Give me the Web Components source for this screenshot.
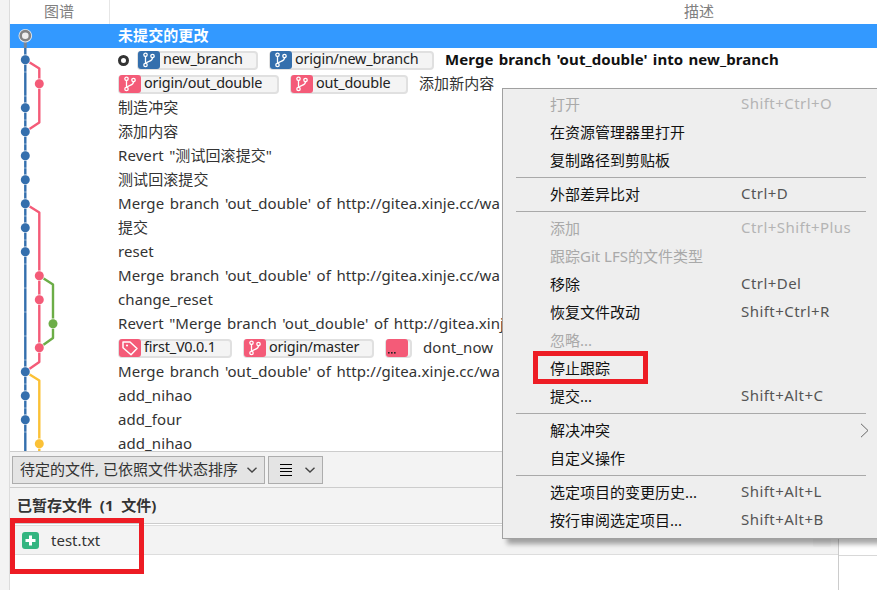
<!DOCTYPE html>
<html lang="zh-CN">
<head>
<meta charset="utf-8">
<title>Sourcetree</title>
<style>
    html, body { margin: 0; height: 100%; overflow: hidden; background: #fff; }
    body { font: 15px "Noto Sans", "Noto Sans CJK SC", sans-serif; color: #333; }
</style>
</head>
<body>
<repo-window>
    <column-header></column-header>
    <commit-list>
        <commit-row selected>未提交的更改</commit-row>
        <commit-row>
            <head-dot></head-dot>
            <ref-tag color="#346fad" width="121">new_branch</ref-tag>
            <ref-tag color="#346fad" width="165">origin/new_branch</ref-tag>
            <b>Merge branch 'out_double' into new_branch</b>
        </commit-row>
        <commit-row>
            <ref-tag color="#f45b78" width="161">origin/out_double</ref-tag>
            <ref-tag color="#f45b78" width="118">out_double</ref-tag>
            <span>添加新内容</span>
        </commit-row>
        <commit-row>制造冲突</commit-row>
        <commit-row>添加内容</commit-row>
        <commit-row>Revert "测试回滚提交"</commit-row>
        <commit-row>测试回滚提交</commit-row>
        <commit-row>Merge branch 'out_double' of http://gitea.xinje.cc/wa</commit-row>
        <commit-row>提交</commit-row>
        <commit-row>reset</commit-row>
        <commit-row>Merge branch 'out_double' of http://gitea.xinje.cc/wa</commit-row>
        <commit-row>change_reset</commit-row>
        <commit-row>Revert "Merge branch 'out_double' of http://gitea.xinj</commit-row>
        <commit-row>
            <ref-tag color="#f45b78" width="114" kind="tag">first_V0.0.1</ref-tag>
            <ref-tag color="#f45b78" width="131">origin/master</ref-tag>
            <ref-tag color="#f45b78" width="27" kind="more"></ref-tag>
            <span>dont_now</span>
        </commit-row>
        <commit-row>Merge branch 'out_double' of http://gitea.xinje.cc/wa</commit-row>
        <commit-row>add_nihao</commit-row>
        <commit-row>add_four</commit-row>
        <commit-row>add_nihao</commit-row>
    </commit-list>
    <status-toolbar></status-toolbar>
    <staged-panel>
        <span slot="title">已暂存文件  (1  文件)</span>
        test.txt
    </staged-panel>
</repo-window>

<context-menu>
    <menu-item disabled>打开<span slot="keys">Shift+Ctrl+O</span></menu-item>
    <menu-item>在资源管理器里打开</menu-item>
    <menu-item>复制路径到剪贴板</menu-item>
    <menu-sep></menu-sep>
    <menu-item>外部差异比对<span slot="keys">Ctrl+D</span></menu-item>
    <menu-sep></menu-sep>
    <menu-item disabled>添加<span slot="keys">Ctrl+Shift+Plus</span></menu-item>
    <menu-item disabled>跟踪Git LFS的文件类型</menu-item>
    <menu-item>移除<span slot="keys">Ctrl+Del</span></menu-item>
    <menu-item>恢复文件改动<span slot="keys">Shift+Ctrl+R</span></menu-item>
    <menu-item disabled>忽略...</menu-item>
    <menu-item>停止跟踪</menu-item>
    <menu-item>提交...<span slot="keys">Shift+Alt+C</span></menu-item>
    <menu-sep></menu-sep>
    <menu-item submenu>解决冲突</menu-item>
    <menu-item>自定义操作</menu-item>
    <menu-sep></menu-sep>
    <menu-item>选定项目的变更历史...<span slot="keys">Shift+Alt+L</span></menu-item>
    <menu-item>按行审阅选定项目...<span slot="keys">Shift+Alt+B</span></menu-item>
</context-menu>

<red-mark style="left:10px;top:518px;width:134px;height:56px"></red-mark>
<red-mark style="left:533px;top:351px;width:115px;height:33px"></red-mark>

<script>
    const BLUE = '#346fad', PINK = '#f45b78', GREEN = '#6cad47', YELLOW = '#fbc136';
    const LANE = [25.3, 39.3, 53];
    const rowY = (i) => 11.7 + 24 * i;  // centre of row i, inside the list's own box

    class RepoWindow extends HTMLElement {
        constructor () {
            super();
            this.attachShadow({mode: 'open'}).innerHTML = `
                <style>
                    :host { display: flex; height: 590px; }
                    .gutter { width: 9px; background: #f3f3f3; border-right: 1px solid #dcdcdc; flex: none; }
                    .main { flex: 1; min-width: 0; display: flex; flex-direction: column; }
                </style>
                <div class="gutter"></div>
                <div class="main"><slot></slot></div>
            `;
        }
    }

    class ColumnHeader extends HTMLElement {
        constructor () {
            super();
            this.attachShadow({mode: 'open'}).innerHTML = `
                <style>
                    :host { display: flex; height: 24px; color: #808080; background: #fff; line-height: 22px; flex: none; }
                    .graph { width: 100px; box-sizing: border-box; padding-left: 34px; border-right: 1px solid #e6e6e6; }
                    .desc { flex: 1; padding-left: 574px; }
                </style>
                <div class="graph">图谱</div>
                <div class="desc">描述</div>
            `;
        }
    }

    class CommitGraph extends HTMLElement {
        constructor () {
            super();
            this.root = this.attachShadow({mode: 'open'});
        }

        connectedCallback () {
            const nodes = [
                [1, 0, BLUE], [2, 1, PINK], [3, 0, BLUE], [4, 0, BLUE], [5, 0, BLUE], [6, 0, BLUE],
                [7, 0, BLUE], [8, 0, BLUE], [9, 0, BLUE], [10, 1, PINK], [11, 1, PINK], [12, 2, GREEN],
                [13, 1, PINK], [14, 0, BLUE], [15, 0, BLUE], [16, 0, BLUE], [17, 1, YELLOW],
            ];
            // y positions here are list-relative: page y minus 24
            const lines = [
                [`M${LANE[0]} 35.7L${LANE[1]} 44.5V98.5L${LANE[0]} 107.7`, PINK],
                [`M${LANE[0]} 179.7L${LANE[1]} 188.5V323.7V338L${LANE[0]} 347.7`, PINK],
                [`M${LANE[1]} 251.7L${LANE[2]} 260.5V314L${LANE[1]} 323.7`, GREEN],
                [`M${LANE[0]} 347.7L${LANE[1]} 356.5V427`, YELLOW],
                [`M${LANE[0]} 24V427`, BLUE],
            ];
            const seams = [];
            for (let i = 2; i < 18; i++) {
                seams.push(`<rect x="${LANE[0] - 2}" y="${24 * i - 0.5}" width="4" height="1" fill="#fff" opacity=".45"/>`);
            }
            this.root.innerHTML = `
                <style>
                    :host { position: absolute; left: 0; top: 0; width: 70px; height: 427px; pointer-events: none; }
                    svg { display: block; }
                </style>
                <svg width="70" height="427" viewBox="10 0 70 427" fill="none">
                    ${lines.map(([d, c]) => `<path d="${d}" stroke="${c}" stroke-width="2.4" stroke-linejoin="round"/>`).join('')}
                    <path d="M${LANE[0]} 12V24" stroke="#77879a" stroke-width="3"/>
                    ${seams.join('')}
                    ${nodes.map(([i, l, c]) => `<circle cx="${LANE[l]}" cy="${rowY(i)}" r="5.4" fill="#fff" opacity=".75"/><circle cx="${LANE[l]}" cy="${rowY(i)}" r="4.5" fill="${c}"/>`).join('')}
                    <circle cx="${LANE[0]}" cy="11.7" r="6.8" fill="#e4e9ef"/>
                    <circle cx="${LANE[0]}" cy="11.7" r="4.6" fill="#eeeeee" stroke="#838383" stroke-width="2.6"/>
                </svg>
            `;
        }
    }

    class CommitList extends HTMLElement {
        constructor () {
            super();
            this.attachShadow({mode: 'open'}).innerHTML = `
                <style>
                    :host { display: block; position: relative; height: 427px; flex: none; background: #fff; }
                </style>
                <slot></slot>
                <commit-graph></commit-graph>
            `;
        }
    }

    class CommitRow extends HTMLElement {
        constructor () {
            super();
            this.attachShadow({mode: 'open'}).innerHTML = `
                <style>
                    :host { display: flex; align-items: center; gap: 11px; box-sizing: border-box; height: 24px; padding: 0 0 2px 108px;
                            line-height: 16px; white-space: nowrap; word-spacing: 1.5px; letter-spacing: .08px; }
                    :host([selected]) { background: #3399ff; color: #fff; font-weight: 700; }
                    ::slotted(b) { color: #111; word-spacing: 1.2px; }
                </style>
                <slot></slot>
            `;
        }
    }

    class HeadDot extends HTMLElement {
        constructor () {
            super();
            this.attachShadow({mode: 'open'}).innerHTML = `
                <style>
                    :host { display: block; box-sizing: border-box; width: 11px; height: 11px; margin: 2px -3px 0 0; border: 3px solid #333; border-radius: 50%; flex: none; }
                </style>
            `;
        }
    }

    const TAG_ICONS = {
        branch: `<svg width="22" height="18" viewBox="0 0 22 18" fill="none" stroke="#fff" stroke-width="1.3">
                    <circle cx="7.5" cy="3.8" r="1.7"/><circle cx="7.5" cy="14" r="1.7"/><circle cx="14.5" cy="5" r="1.7"/>
                    <path d="M7.5 5.5V12.3M14.5 6.7C14.5 10.8 9.5 9.8 8.2 12.4"/>
                 </svg>`,
        tag: `<svg width="22" height="18" viewBox="0 0 22 18" fill="none" stroke="#fff" stroke-width="1.5" stroke-linejoin="round">
                    <path d="M4 3H11L18 9.5L12 15.8L4 8.8Z"/><circle cx="8" cy="6.5" r="1.1" fill="#fff" stroke="none"/>
              </svg>`,
        more: `<svg width="22" height="18" viewBox="0 0 22 18" fill="#222">
                    <rect x="2" y="13" width="1.6" height="1.6"/><rect x="5" y="13" width="1.6" height="1.6"/><rect x="8" y="13" width="1.6" height="1.6"/>
               </svg>`,
    };

    class RefTag extends HTMLElement {
        constructor () {
            super();
            this.root = this.attachShadow({mode: 'open'});
        }

        connectedCallback () {
            const kind = this.getAttribute('kind') || 'branch';
            this.root.innerHTML = `
                <style>
                    :host { display: flex; align-items: center; box-sizing: border-box; height: 19px; margin-top: 2px; flex: none;
                            font-size: 14.4px; letter-spacing: -.2px;
                            width: ${this.getAttribute('width')}px; background: #f4f4f4; border: 2px solid #e0e0e0; border-radius: 4px; color: #222; }
                    .icon { display: flex; align-items: center; width: 22px; height: 18px; margin: -1px 3px -1px -1px; flex: none;
                            background: ${this.getAttribute('color')}; border-radius: 3px; }
                    .text { margin-top: -2px; }
                </style>
                <span class="icon">${TAG_ICONS[kind]}</span><span class="text"><slot></slot></span>
            `;
        }
    }

    class StatusToolbar extends HTMLElement {
        constructor () {
            super();
            const chevron = '<svg width="10" height="6" viewBox="0 0 10 6" fill="none" stroke="#444" stroke-width="1.4"><path d="M.5 .8L5 5L9.5 .8"/></svg>';
            this.attachShadow({mode: 'open'}).innerHTML = `
                <style>
                    :host { display: flex; align-items: center; gap: 3px; box-sizing: border-box; height: 37px; width: 828px; padding: 0 2px; flex: none;
                            position: relative; background: #f3f3f3; border-top: 1px solid #ccc; border-bottom: 1px solid #ccc; }
                    .btn { display: flex; align-items: center; justify-content: space-between; box-sizing: border-box; height: 28px;
                           background: #e4e4e4; border: 1px solid #adadad; }
                    .sort { width: 253px; padding: 0 7px; color: #333; }
                    .sort span { margin-top: -2px; }
                    .view { width: 55px; padding: 0 7px 0 11px; }
                    .lines { display: flex; flex-direction: column; gap: 2px; width: 12px; }
                    .lines i { display: block; height: 1px; background: #000; }
                    .lines i:nth-child(1), .lines i:nth-child(3) { margin-bottom: 1px; }
                </style>
                <div class="btn sort"><span>待定的文件, 已依照文件状态排序</span>${chevron}</div>
                <div class="btn view"><span class="lines"><i></i><i></i><i></i><i></i></span>${chevron}</div>
            `;
        }
    }

    class StagedPanel extends HTMLElement {
        constructor () {
            super();
            this.attachShadow({mode: 'open'}).innerHTML = `
                <style>
                    :host { display: flex; flex: 1; min-height: 0; position: relative; background: #fff; }
                    .left { width: 828px; flex: none; border-right: 1px solid #ccc; }
                    .right { flex: 1; height: 67px; border-bottom: 1px solid #d8d8d8; }
                    .title { display: flex; align-items: center; box-sizing: border-box; height: 36px; padding: 0 0 2px 7px;
                             background: #f3f3f3; font-weight: 700; white-space: pre; border-bottom: 1px solid #ccc; }
                    .file { display: flex; align-items: center; gap: 12px; box-sizing: border-box; height: 30px; margin-top: 1px; padding-left: 12px;
                            background: #f3f3f3; border-top: 1px solid #ddd; border-bottom: 1px solid #ddd; }
                    .name { flex: 1; margin-top: -1px; }
                    .badge { display: flex; align-items: center; justify-content: center; width: 17px; height: 17px; border-radius: 3px; background: #33b580; }
                    .unstage { display: flex; align-items: center; justify-content: center; width: 18px; height: 20px; margin-right: 7px; margin-top: -6px; background: #eee; border-radius: 2px; }
                    .unstage i { display: block; width: 12px; height: 3px; background: #444; }
                </style>
                <div class="left">
                    <div class="title"><slot name="title"></slot></div>
                    <div class="file">
                        <span class="badge"><svg width="11" height="11" viewBox="0 0 11 11" fill="#fff"><path d="M4 .5H7V4H10.5V7H7V10.5H4V7H.5V4H4Z"/></svg></span>
                        <span class="name"><slot></slot></span>
                        <span class="unstage"><i></i></span>
                    </div>
                </div>
                <div class="right"></div>
            `;
        }
    }

    class ContextMenu extends HTMLElement {
        constructor () {
            super();
            this.attachShadow({mode: 'open'}).innerHTML = `
                <style>
                    :host { display: block; position: absolute; left: 502px; top: 88px; width: 385px; box-sizing: border-box; padding: 1px 0 4px;
                            background: #eee; border: 1px solid #a0a0a0; box-shadow: 5px 5px 5px rgba(0, 0, 0, .35); color: #111; }
                </style>
                <slot></slot>
            `;
        }
    }

    class MenuItem extends HTMLElement {
        constructor () {
            super();
            this.attachShadow({mode: 'open'}).innerHTML = `
                <style>
                    :host { display: grid; grid-template-columns: 191px 119px 10px; align-items: center; box-sizing: border-box; height: 28px; padding: 0 0 2px 47px; white-space: nowrap; }
                    :host([disabled]) { color: #a9a9a9; }
                    .keys { color: #555; letter-spacing: .45px; }
                    :host([disabled]) .keys { color: #b4b4b4; }
                    svg { display: none; margin-top: 2px; }
                    :host([submenu]) svg { display: block; }
                </style>
                <div><slot></slot></div>
                <div class="keys"><slot name="keys"></slot></div>
                <svg width="9" height="15" viewBox="0 0 9 15" fill="none" stroke="#666" stroke-width="1"><path d="M1 .8L8 7.5L1 14.2"/></svg>
            `;
        }
    }

    class MenuSep extends HTMLElement {
        constructor () {
            super();
            this.attachShadow({mode: 'open'}).innerHTML = `
                <style>
                    :host { display: block; box-sizing: border-box; height: 6px; padding-top: 3px; }
                    div { width: 350px; height: 1px; margin-left: 13px; background: #a9a9a9; }
                </style>
                <div></div>
            `;
        }
    }

    class RedMark extends HTMLElement {
        constructor () {
            super();
            this.attachShadow({mode: 'open'}).innerHTML = `
                <style>
                    :host { display: block; position: absolute; box-sizing: border-box; border: 5px solid #ed1c24; pointer-events: none; }
                </style>
            `;
        }
    }

    customElements.define('commit-graph', CommitGraph);
    customElements.define('column-header', ColumnHeader);
    customElements.define('commit-list', CommitList);
    customElements.define('commit-row', CommitRow);
    customElements.define('head-dot', HeadDot);
    customElements.define('ref-tag', RefTag);
    customElements.define('status-toolbar', StatusToolbar);
    customElements.define('staged-panel', StagedPanel);
    customElements.define('repo-window', RepoWindow);
    customElements.define('menu-item', MenuItem);
    customElements.define('menu-sep', MenuSep);
    customElements.define('context-menu', ContextMenu);
    customElements.define('red-mark', RedMark);
</script>
</body>
</html>
